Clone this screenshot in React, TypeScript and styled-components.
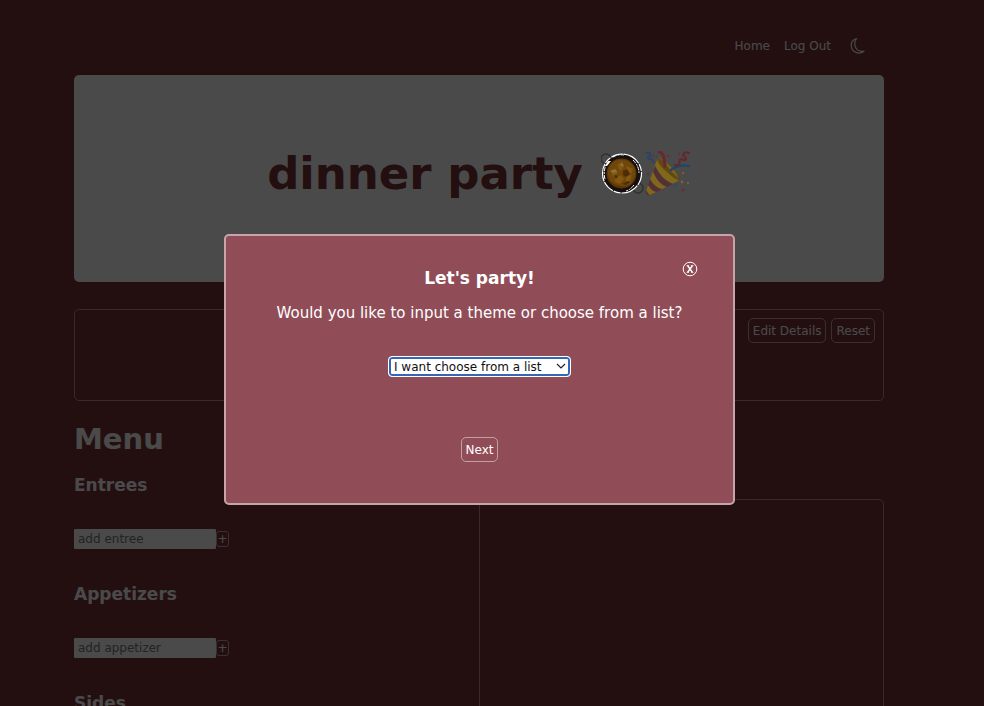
import React from "react";
import styled, { createGlobalStyle } from "styled-components";

const GlobalStyle = createGlobalStyle`
  * { box-sizing: border-box; }
  body {
    margin: 0;
    overflow: hidden;
    background: #753238;
    color: #f7f7f7;
    font-family: Verdana, "DejaVu Sans", sans-serif;
    font-size: 12px;
  }
  button, input, select { font: inherit; color: inherit; }
`;

const Page = styled.div`
  min-height: 100vh;
  padding: 0 100px 0 74px;
`;

const Nav = styled.nav`
  display: flex;
  justify-content: flex-end;
  align-items: center;
  gap: 14px;
  height: 75px;
  padding: 16px 18px 0 0;
`;

const NavLink = styled.a`
  color: inherit;
  text-decoration: none;
`;

const IconButton = styled.button`
  display: flex;
  padding: 0;
  border: 0;
  background: none;
  cursor: pointer;
`;

const ThemeButton = styled(IconButton)`
  margin-left: 5px;
`;

const Banner = styled.header`
  display: flex;
  justify-content: center;
  align-items: center;
  gap: 18px;
  height: 207px;
  padding-bottom: 10px;
  border-radius: 5px;
  background: #f7f7f7;
  color: #753238;
`;

const PageTitle = styled.h1`
  margin: 0;
  font-size: 45px;
  line-height: 54px;
`;

const Outlined = styled.button`
  height: 25px;
  padding: 0 4px;
  border: 1px solid #c0a2a5;
  border-radius: 5px;
  background: transparent;
  cursor: pointer;
`;

const Details = styled.section`
  display: flex;
  justify-content: flex-end;
  align-items: flex-start;
  gap: 5px;
  height: 92px;
  margin-top: 27px;
  padding: 8px;
  border: 1px solid #b58d91;
  border-radius: 5px;
`;

const Columns = styled.main`
  display: grid;
  grid-template-columns: 1fr 1fr;
`;

const MenuColumn = styled.section`
  padding-top: 20px;
`;

const MenuTitle = styled.h2`
  margin: 0 0 12px;
  font-size: 29px;
  line-height: 36px;
`;

const Course = styled.form`
  height: 109px;
  padding-top: 4px;
`;

const CourseTitle = styled.h3`
  margin: 0 0 32px;
  font-size: 17px;
  line-height: 24px;
`;

const AddRow = styled.div`
  display: flex;
  align-items: center;
`;

const AddInput = styled.input`
  width: 142px;
  height: 20px;
  padding: 0 4px;
  border: 0;
  border-radius: 1px;
  background: #f7f7f7;
  &::placeholder { color: #757575; opacity: 1; }
`;

const AddButton = styled.button`
  width: 13px;
  height: 16px;
  padding: 0;
  border: 1px solid #c0a2a5;
  border-radius: 3px;
  background: transparent;
  line-height: 14px;
  cursor: pointer;
`;

const Panel = styled.section`
  height: 420px;
  margin-top: 98px;
  border: 1px solid #b58d91;
  border-radius: 5px;
`;

const Overlay = styled.div`
  position: fixed;
  inset: 0;
  display: flex;
  justify-content: center;
  align-items: center;
  padding: 33px 25px 0 0;
  background: rgba(0, 0, 0, 0.7);
`;

const Dialog = styled.div`
  position: relative;
  display: flex;
  flex-direction: column;
  align-items: center;
  width: 511px;
  max-width: 90%;
  padding: 30px 24px 41px;
  border: 2px solid #c5a5aa;
  border-radius: 5px;
  background: #904d57;
  color: #ffffff;
`;

const CloseButton = styled(IconButton)`
  position: absolute;
  top: 25px;
  right: 35px;
`;

const DialogTitle = styled.h2`
  margin: 0;
  font-size: 17px;
  line-height: 24px;
`;

const Question = styled.label`
  margin: 12px 0 32px;
  font-size: 15px;
  line-height: 22px;
`;

const SelectWrap = styled.div`
  position: relative;
  margin-bottom: 60px;
`;

const ThemeSelect = styled.select`
  display: block;
  appearance: none;
  width: 183px;
  height: 21px;
  padding: 0 20px 0 5px;
  border: 1px solid #ffffff;
  border-radius: 4px;
  outline: 0;
  box-shadow: inset 0 0 0 2px #3568b4;
  background: #ffffff;
  color: #111111;
  line-height: 16px;
`;

const Chevron = styled.svg`
  position: absolute;
  top: 6px;
  right: 4px;
  pointer-events: none;
`;

// Stacked above the page overlay, so the drawings carry their own dimmed colours.
const PartyEmojis = styled.div`
  position: relative;
  z-index: 1;
  display: flex;
  pointer-events: none;
`;

function Moon() {
  return (
    <svg width="16" height="18" viewBox="0 0 16 18" fill="none" stroke="#f7f7f7" strokeWidth="1.2" strokeLinejoin="round">
      <path d="M6.5 1.5C2.5 3 .5 6.400 1.500 10.400 2.800 15.500 9.200 18 14 14.200 9.500 14.800 6.300 12.800 5.200 9.400 4.300 6.500 4.800 3.700 6.500 1.500Z" />
    </svg>
  );
}

function PanIcon() {
  return (
    <svg width="43" height="46" viewBox="0 0 43 46">
      <g fill="none" stroke="#303030" strokeWidth="1.5">
        <circle cx="5" cy="8" r="5" />
        <circle cx="37" cy="37" r="5" />
      </g>
      <circle cx="21" cy="22.500" r="19.500" fill="#17100e" />
      <circle cx="20.500" cy="22.500" r="15" fill="#5c3609" />
      <path d="M7 20C9 12 14 8 21 9c9 0 14 7 13 15-1 8-7 12-14 11-9-1-14-8-13-15Z" fill="#704609" />
      <path d="m16 14 4-3 3 5-4 4ZM10 20l5-2 2 4-5 4Zm16-5 6 3-2 5-5-3ZM14 27l6-3 3 4-4 5-5-2Zm11-2 6-1-2 6-4 2Z" fill="#825710" />
      <path d="m19 15 2-4 2 4ZM9 20l5-2 2 3-4 1Z" fill="#8d7042" />
      <path d="m22 20 4-2 3 5-4 3-3-2ZM13 24l4 1-2 3Zm8 9 6-3 2 1-4 3Z" fill="#4c2c09" />
      <g fill="none" stroke="#ffffff">
        <circle cx="21" cy="22.500" r="19.500" strokeWidth="1.200" strokeDasharray="12 1 18 1 7 1" />
        <path d="M4 28Q2 21 5 14M12 6q5-3 11-2M32 9q6 6 6 13M33 34q-4 5-8 6" strokeDasharray="4 1 2 1" />
        <path d="m4 15 3-5 3 0-4 5Z" fill="#ffffff" stroke="none" />
      </g>
    </svg>
  );
}

function PopperIcon() {
  return (
    <svg width="47" height="46" viewBox="0 0 47 46">
      <path d="M14 6 2 40q-1 4 4 4l28-14q3-4-6-13Q20 8 14 6Z" fill="#806719" />
      <path d="M13 7q1 7 10 14 7 7 12 8 2-4-7-12Q19 8 13 6Z" fill="#5e4816" />
      <path d="m19 10 8 10 7 7q0-4-7-11Z" fill="#806319" />
      <path d="m11 15-2 6q6 13 14 15l6-3Q18 29 11 15ZM6 28l-2 6q4 7 9 7l5-3Q11 37 6 28ZM2 39q2 4 4 5l-3 0q-2-2-1-5Z" fill="#513039" />
      <g fill="none" strokeLinecap="round">
        <path d="M3 2q4-1 3 3-4 1-1 3 4-1 4 3" stroke="#294468" strokeWidth="2" />
        <path d="M15 1q4 1 5 6l1 8" stroke="#6d242c" strokeWidth="2.8" />
        <path d="M27 19q7-6 18-4" stroke="#244564" strokeWidth="2.5" />
        <path d="M31 14c7 2 3-6 6-6 8 3 5-2 2-4q1-4 6-2" stroke="#67242d" strokeWidth="2" />
      </g>
      <g fill="#64313a">
        <circle cx="9" cy="5" r="1.200" /><circle cx="24" cy="5" r="1.200" />
        <circle cx="35" cy="3" r="1.200" /><circle cx="4" cy="23" r="1.300" />
        <circle cx="39" cy="39" r="1.700" />
      </g>
      <g fill="#294b6c">
        <circle cx="31" cy="34" r="1.400" /><circle cx="13" cy="6" r="1.200" />
      </g>
      <g fill="#80602c">
        <circle cx="39" cy="22" r="1.200" /><circle cx="38" cy="31" r="1.400" /><circle cx="44" cy="32" r="1.200" />
      </g>
    </svg>
  );
}

const courses = [
  { title: "Entrees", item: "entree" },
  { title: "Appetizers", item: "appetizer" },
  { title: "Sides", item: "side" },
];

export default function App() {
  return (
    <>
      <GlobalStyle />
      <Page>
        <Nav>
          <NavLink href="#home">Home</NavLink>
          <NavLink href="#logout">Log Out</NavLink>
          <ThemeButton type="button" aria-label="Toggle dark mode"><Moon /></ThemeButton>
        </Nav>
        <Banner>
          <PageTitle>dinner party</PageTitle>
          <PartyEmojis>
            <PanIcon />
            <PopperIcon />
          </PartyEmojis>
        </Banner>
        <Details>
          <Outlined type="button">Edit Details</Outlined>
          <Outlined type="button">Reset</Outlined>
        </Details>
        <Columns>
          <MenuColumn>
            <MenuTitle>Menu</MenuTitle>
            {courses.map(({ title, item }) => (
              <Course key={item}>
                <CourseTitle>{title}</CourseTitle>
                <AddRow>
                  <AddInput aria-label={`add ${item}`} placeholder={`add ${item}`} />
                  <AddButton type="button" aria-label={`Add ${item}`}>+</AddButton>
                </AddRow>
              </Course>
            ))}
          </MenuColumn>
          <Panel />
        </Columns>
      </Page>
      <Overlay>
        <Dialog role="dialog" aria-modal="true" aria-labelledby="party-title">
          <CloseButton type="button" aria-label="Close">
            <svg width="16" height="16" viewBox="0 0 16 16" fill="none" stroke="#ffffff">
              <circle cx="8" cy="8" r="6.800" strokeWidth="1" />
              <path d="m5.500 4.500 5 7m0-7-5 7" strokeWidth="1.400" />
              <path d="M4.500 4.500H7M9 4.500h2.500M4.500 11.500H7M9 11.500h2.500" strokeWidth=".6" />
            </svg>
          </CloseButton>
          <DialogTitle id="party-title">Let's party!</DialogTitle>
          <Question htmlFor="theme-choice">Would you like to input a theme or choose from a list?</Question>
          <SelectWrap>
            <ThemeSelect id="theme-choice" defaultValue="list">
              <option value="list">I want choose from a list</option>
              <option value="input">I want to input a theme</option>
            </ThemeSelect>
            <Chevron width="12" height="9" viewBox="0 0 12 9" fill="none" stroke="#222222" strokeWidth="1.200">
              <path d="m2 2 4 4 4-4" />
            </Chevron>
          </SelectWrap>
          <Outlined type="button">Next</Outlined>
        </Dialog>
      </Overlay>
    </>
  );
}
